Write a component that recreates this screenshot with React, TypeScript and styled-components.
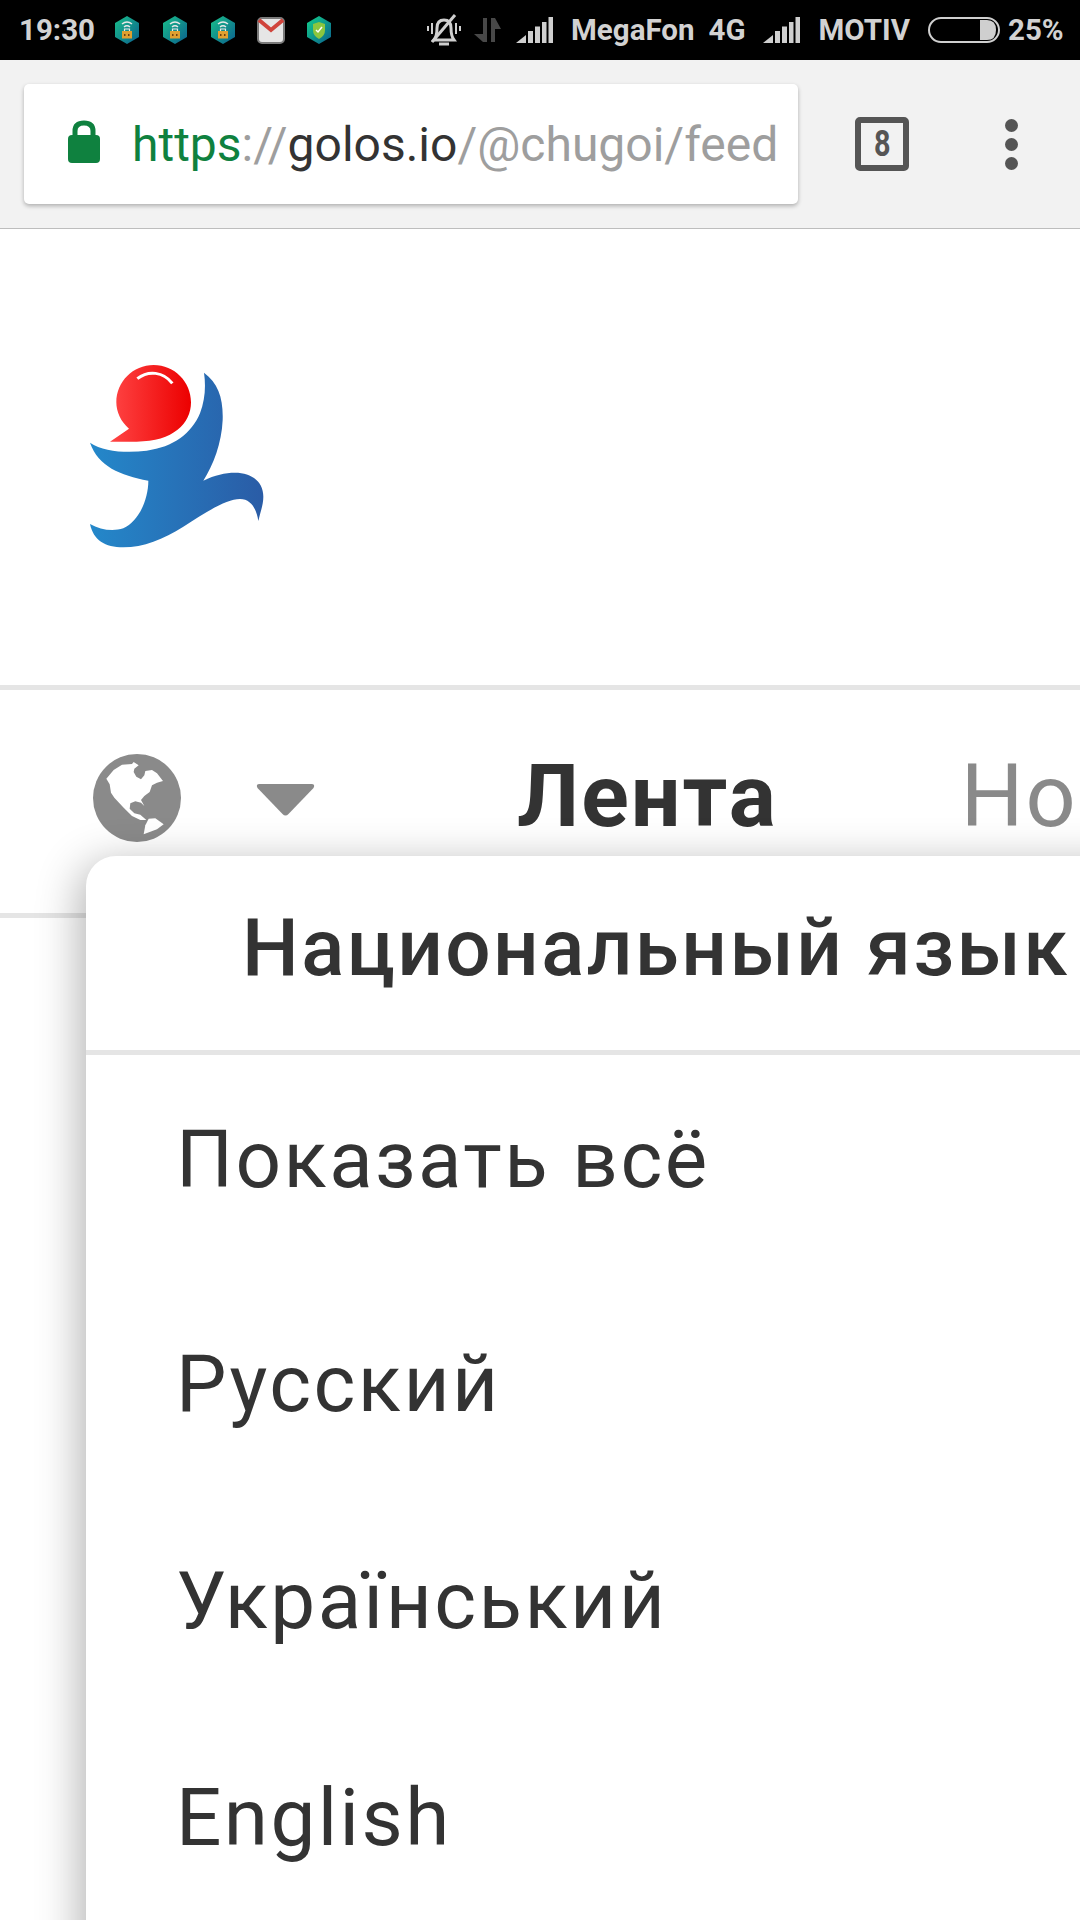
import React from "react";
import styled, { createGlobalStyle } from "styled-components";

const Global = createGlobalStyle`
  html, body { margin: 0; padding: 0; background: #fff; }
  body { font-family: Roboto, "Liberation Sans", sans-serif; }
`;

const Page = styled.div`
  position: relative;
  width: 1080px;
  height: 1920px;
  overflow: hidden;
  background: #fff;
`;

const StatusBar = styled.div`
  height: 60px;
  background: #000;
  display: flex;
  align-items: center;
  padding-left: 19px;
  color: #d2d2d2;
  box-sizing: border-box;
`;

const StatusText = styled.span<{ $ml?: number }>`
  font-size: 29.5px;
  font-weight: 700;
  line-height: 60px;
  margin-left: ${(p) => p.$ml ?? 0}px;
  white-space: nowrap;
`;

const StatusIcon = styled.svg<{ $ml?: number }>`
  display: block;
  flex: none;
  margin-left: ${(p) => p.$ml ?? 0}px;
`;

const Toolbar = styled.div`
  height: 168px;
  background: #f2f2f2;
  border-bottom: 1px solid #bdbdbd;
  display: flex;
  align-items: center;
  padding: 0 0 0 24px;
`;

const UrlBox = styled.div`
  width: 774px;
  height: 120px;
  flex: none;
  background: #fff;
  border-radius: 5px;
  box-shadow: 0 2px 4px rgba(0, 0, 0, 0.28);
  display: flex;
  align-items: center;
  padding-left: 44px;
  box-sizing: border-box;
  overflow: hidden;
`;

const LockIcon = styled.svg`
  display: block;
  flex: none;
  margin-bottom: 6px;
`;

const Url = styled.div`
  margin-left: 32px;
  font-size: 48px;
  white-space: nowrap;
  color: #9e9e9e;
`;

const UrlPart = styled.span<{ $color: string }>`
  color: ${(p) => p.$color};
`;

const TabCount = styled.div`
  margin-left: 57px;
  width: 54px;
  height: 54px;
  flex: none;
  box-sizing: border-box;
  border: 6px solid #555;
  border-radius: 5px;
  display: flex;
  align-items: center;
  justify-content: center;
  color: #555;
  font-size: 36px;
  font-weight: 700;
`;

const TabDigit = styled.span`
  display: block;
  transform: scaleX(0.8);
`;

const Dots = styled.div`
  margin-left: 96px;
  display: flex;
  flex-direction: column;
  gap: 6px;
`;

const Dot = styled.span`
  display: block;
  width: 13px;
  height: 13px;
  border-radius: 50%;
  background: #555;
`;

const LogoArea = styled.div`
  height: 456px;
  padding: 111px 0 0 60px;
  box-sizing: border-box;
`;

const Logo = styled.svg`
  display: block;
`;

const Rule = styled.div`
  height: 5px;
  background: #e5e5e5;
`;

const Nav = styled.div`
  height: 223px;
  display: flex;
  align-items: flex-start;
  padding: 64px 0 0 93px;
  box-sizing: border-box;
  white-space: nowrap;
`;

const Globe = styled.svg`
  display: block;
  flex: none;
`;

const Caret = styled.svg`
  display: block;
  flex: none;
  margin: 29px 0 0 74px;
`;

const NavLink = styled.span<{ $active?: boolean; $ml: number }>`
  font-size: 88px;
  line-height: 84px;
  letter-spacing: 2px;
  margin-left: ${(p) => p.$ml}px;
  font-weight: ${(p) => (p.$active ? 700 : 400)};
  color: ${(p) => (p.$active ? "#333" : "#8a8a8a")};
`;

const Menu = styled.div`
  position: absolute;
  left: 86px;
  top: 856px;
  width: 1100px;
  height: 1200px;
  background: #fff;
  border-radius: 30px 0 0 0;
  box-shadow: -6px 8px 44px rgba(0, 0, 0, 0.3);
  color: #333;
`;

const MenuTitle = styled.div`
  height: 194px;
  box-sizing: border-box;
  padding: 42px 0 0 156px;
  font-size: 80px;
  line-height: 100px;
  font-weight: 500;
  letter-spacing: 2.4px;
  white-space: nowrap;
`;

const MenuRule = styled.div`
  height: 5px;
  background: #e5e5e5;
`;

const MenuList = styled.div`
  display: flex;
  flex-direction: column;
`;

const MenuItem = styled.div`
  height: 217px;
  box-sizing: border-box;
  display: flex;
  align-items: center;
  padding-left: 90px;
  font-size: 80px;
  letter-spacing: 2.4px;
  white-space: nowrap;

  &:first-child {
    height: 220px;
    padding-bottom: 11px;
  }
`;

const HexLock: React.FC<{ ml: number; id: string }> = ({ ml, id }) => (
  <StatusIcon $ml={ml} width="24" height="28" viewBox="0 0 24 28">
    <defs>
      <linearGradient id={id} x1="0" y1="0" x2="1" y2="1">
        <stop offset="0" stopColor="#19c08a" />
        <stop offset="1" stopColor="#0b5f8e" />
      </linearGradient>
    </defs>
    <path d="M12 0 L24 7 V21 L12 28 L0 21 V7 Z" fill={`url(#${id})`} />
    <path d="M7 8 Q12 4 17 8 M9 11 Q12 8.500 15 11" stroke="#e8e8e8" strokeWidth="1.500" fill="none" />
    <path d="M9.500 15 V13 H14.500 V15" stroke="#e8e8e8" strokeWidth="1.200" fill="none" />
    <rect x="7" y="15" width="10" height="7.500" fill="#e0a030" />
    <rect x="9" y="18" width="1.500" height="2" fill="#704010" />
    <rect x="13" y="18" width="1.500" height="2" fill="#704010" />
  </StatusIcon>
);

const Signal: React.FC<{ ml: number }> = ({ ml }) => (
  <StatusIcon $ml={ml} width="37" height="26" viewBox="0 0 37 26" fill="#cfcfcf">
    <path d="M0 26 L10 18 V26 Z" />
    <rect x="12" y="14" width="5" height="12" />
    <rect x="19" y="9.500" width="5" height="16.500" />
    <rect x="26" y="5" width="4.500" height="21" />
    <rect x="32.500" y="0" width="4.500" height="26" />
  </StatusIcon>
);

export default function App() {
  return (
    <Page>
      <Global />
      <StatusBar>
        <StatusText>19:30</StatusText>
        <HexLock ml={20} id="hexa" />
        <HexLock ml={24} id="hexb" />
        <HexLock ml={24} id="hexc" />
        <StatusIcon $ml={22} width="28" height="27" viewBox="0 0 28 27">
          <rect x="1" y="1" width="26" height="25" rx="4" fill="#e6e6e6" stroke="#7a7a7a" strokeWidth="2" />
          <path d="M2 3 L14 13 L26 3" stroke="#d0443c" strokeWidth="4" fill="none" />
        </StatusIcon>
        <StatusIcon $ml={22} width="24" height="28" viewBox="0 0 24 28">
          <defs>
            <linearGradient id="hexs" x1="0" y1="0" x2="1" y2="1">
              <stop offset="0" stopColor="#12d08a" />
              <stop offset="1" stopColor="#0b5f8e" />
            </linearGradient>
          </defs>
          <path d="M12 0 L24 7 V21 L12 28 L0 21 V7 Z" fill="url(#hexs)" />
          <path d="M12 6 L18 8 V14 Q18 20 12 23 Q6 20 6 14 V8 Z" fill="#8cc63f" />
          <path d="M9 14 L11 16 L15 11" stroke="#fff" strokeWidth="1.500" fill="none" />
        </StatusIcon>
        <StatusIcon $ml={95} width="35" height="32" viewBox="0 0 35 32" fill="none" stroke="#cfcfcf">
          <path d="M8 26 Q11 22 11 14 Q11 6 18 6 Q25 6 25 14 Q25 22 28 26 Z" strokeWidth="3" />
          <path d="M13 30 H23" strokeWidth="3" />
          <path d="M6 9 V20 M2 12 V17 M30 9 V20 M34 12 V17" strokeWidth="2" />
          <path d="M6 28 L29 1" strokeWidth="3" />
        </StatusIcon>
        <StatusIcon $ml={13} width="27" height="25" viewBox="0 0 27 25" fill="#484848">
          <path d="M9 0 H13 V24 H9 L0 16 H9 Z" />
          <path d="M17 24 V0 H21 L27 11 H21 V24 Z" />
        </StatusIcon>
        <Signal ml={15} />
        <StatusText $ml={18}>MegaFon</StatusText>
        <StatusText $ml={14}>4G</StatusText>
        <Signal ml={17} />
        <StatusText $ml={19}>MOTIV</StatusText>
        <StatusIcon $ml={18} width="72" height="26" viewBox="0 0 72 26">
          <rect x="1" y="1" width="70" height="24" rx="12" fill="none" stroke="#cfcfcf" strokeWidth="2" />
          <path d="M52 3 H59 Q68 3 68 13 Q68 23 59 23 H52 Z" fill="#cfcfcf" />
        </StatusIcon>
        <StatusText $ml={8}>25%</StatusText>
      </StatusBar>

      <Toolbar>
        <UrlBox>
          <LockIcon width="32" height="43" viewBox="0 0 32 43">
            <path d="M7 17 V11 Q7 3 16 3 Q25 3 25 11 V17" stroke="#0f813f" strokeWidth="5" fill="none" />
            <rect x="0" y="15" width="32" height="28" rx="4" fill="#0f813f" />
          </LockIcon>
          <Url>
            <UrlPart $color="#0f813f">https</UrlPart>
            ://
            <UrlPart $color="#333">golos.io</UrlPart>
            /@chugoi/feed
          </Url>
        </UrlBox>
        <TabCount>
          <TabDigit>8</TabDigit>
        </TabCount>
        <Dots>
          <Dot />
          <Dot />
          <Dot />
        </Dots>
      </Toolbar>

      <LogoArea>
        <Logo width="230" height="220" viewBox="0 0 690 660">
          <defs>
            <linearGradient id="red" x1="0" y1="0" x2="1" y2="0">
              <stop offset="0" stopColor="#ff4545" />
              <stop offset="1" stopColor="#ec0000" />
            </linearGradient>
            <linearGradient id="blue" x1="0" y1="0" x2="1" y2="0">
              <stop offset="0" stopColor="#2488ca" />
              <stop offset="1" stopColor="#2a5ca6" />
            </linearGradient>
          </defs>
          <path
            d="M150 305 L207 266 C182 245 169 215 169 187 C169 125 219 75 281 75 C343 75 393 125 393 187 C393 250 340 305 230 305 Z"
            fill="url(#red)"
          />
          <path d="M232 116 C265 90 310 95 337 130" stroke="#fff" strokeWidth="9" fill="none" />
          <path
            d="M432 98 C475 130 490 175 488 240 C485 310 460 375 430 422 C465 405 495 398 525 398 C575 398 610 425 610 470 C610 495 600 520 595 543 C590 510 575 477 540 477 C500 477 440 515 370 560 C310 597 250 622 190 622 C135 622 100 600 90 552 C120 570 160 575 190 565 C235 545 265 480 265 422 C180 405 115 380 90 308 C130 335 200 340 260 332 C340 322 395 280 420 220 C435 180 438 140 432 98 Z"
            fill="url(#blue)"
          />
        </Logo>
      </LogoArea>
      <Rule />
      <Nav>
        <Globe width="88" height="88" viewBox="8 14 264 264">
          <circle cx="140" cy="146" r="132" fill="#8a8a8a" />
          <path
            d="M48 88 L70 62 L95 46 L125 44 L130 38 L145 48 L132 58 L130 68 L138 82 L152 90 L162 78 L165 65 L185 62 L200 72 L218 95 L200 100 L185 108 L178 128 L162 140 L152 152 L162 170 L152 160 L135 156 L120 162 L118 178 L132 192 L150 196 L168 212 L150 212 L125 200 L100 175 L72 145 L62 130 L58 105 Z"
            fill="#fff"
          />
          <path d="M165 228 L175 208 L195 207 L220 225 L200 240 L160 255 Z" fill="#fff" />
        </Globe>
        <Caret width="61" height="34" viewBox="0 0 60 34">
          <path d="M4 1 H56 Q60 1 58 5 L33 31 Q30 34 27 31 L2 5 Q0 1 4 1 Z" fill="#8a8a8a" />
        </Caret>
        <NavLink $active $ml={201}>
          Лента
        </NavLink>
        <NavLink $ml={183}>Но</NavLink>
      </Nav>
      <Rule />
      <Menu>
        <MenuTitle>Национальный язык</MenuTitle>
        <MenuRule />
        <MenuList>
          <MenuItem>Показать всё</MenuItem>
          <MenuItem>Русский</MenuItem>
          <MenuItem>Український</MenuItem>
          <MenuItem>English</MenuItem>
        </MenuList>
      </Menu>
    </Page>
  );
}
